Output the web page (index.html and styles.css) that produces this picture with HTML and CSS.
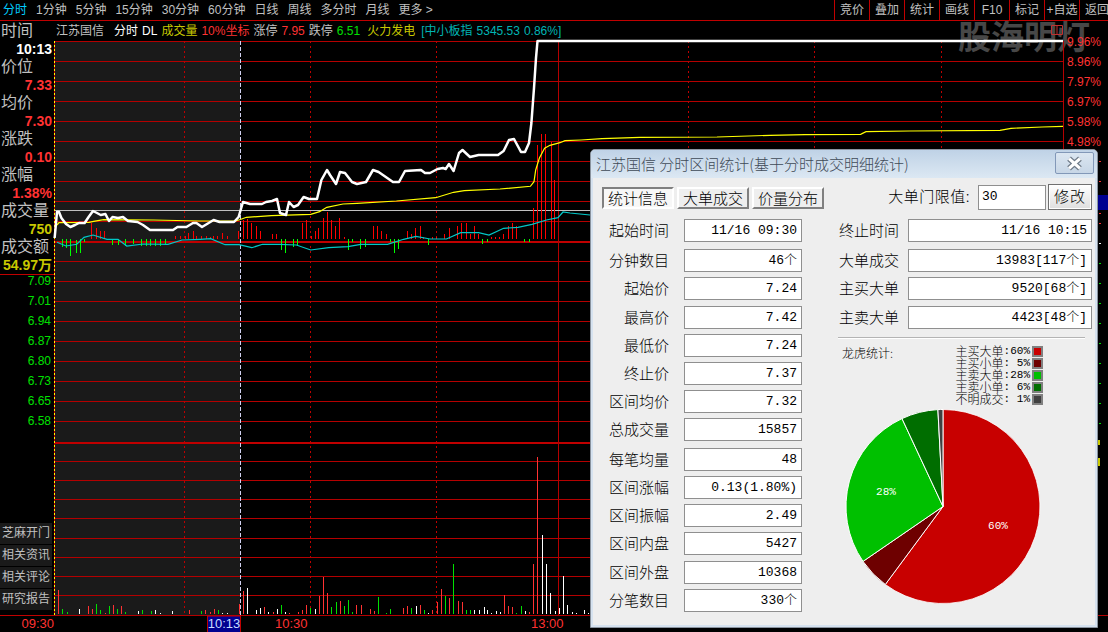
FILE: index.html
```html
<!DOCTYPE html>
<html lang="zh-CN">
<head>
    <meta charset="UTF-8">
    <title>江苏国信 分时区间统计</title>
    <link rel="stylesheet" href="styles.css">
</head>
<body>

    <div class="screen">

        <div class="watermark">股海明灯</div>

        <!-- period bar -->
        <nav class="topbar">
            <div class="periods">
                <span class="active">分时</span>
                <span>1分钟</span>
                <span>5分钟</span>
                <span>15分钟</span>
                <span>30分钟</span>
                <span>60分钟</span>
                <span>日线</span>
                <span>周线</span>
                <span>多分时</span>
                <span>月线</span>
                <span>更多 &gt;</span>
            </div>
            <div class="tools">
                <span>竞价</span>
                <span>叠加</span>
                <span>统计</span>
                <span>画线</span>
                <span>F10</span>
                <span>标记</span>
                <span>+自选</span>
                <span>返回</span>
            </div>
        </nav>

        <div class="main">

            <!-- left rail -->
            <aside class="rail">
                <div class="quote">
                    <div class="q-label">时间</div>
                    <div class="q-value white">10:13</div>
                    <div class="q-label">价位</div>
                    <div class="q-value red">7.33</div>
                    <div class="q-label">均价</div>
                    <div class="q-value red">7.30</div>
                    <div class="q-label">涨跌</div>
                    <div class="q-value red">0.10</div>
                    <div class="q-label">涨幅</div>
                    <div class="q-value red">1.38%</div>
                    <div class="q-label">成交量</div>
                    <div class="q-value yellow">750</div>
                    <div class="q-label">成交额</div>
                    <div class="q-value yellow">54.97万</div>
                </div>
                <div class="price-axis">
                    <span>7.09</span>
                    <span>7.01</span>
                    <span>6.94</span>
                    <span>6.87</span>
                    <span>6.80</span>
                    <span>6.73</span>
                    <span>6.65</span>
                    <span>6.58</span>
                </div>
                <div class="links">
                    <span>芝麻开门</span>
                    <span>相关资讯</span>
                    <span>相关评论</span>
                    <span>研究报告</span>
                </div>
                <div class="rail-foot">09:30</div>
            </aside>

            <section class="chart">
                <div class="chart-head">
                    <span class="grey name">江苏国信</span>
                    <span class="white">分时</span>
                    <span class="white">DL</span>
                    <span class="yellow">成交量</span>
                    <span class="red">10%坐标</span>
                    <span class="grey">涨停</span>
                    <span class="red">7.95</span>
                    <span class="grey">跌停</span>
                    <span class="green">6.51</span>
                    <span class="yellow fire">火力发电</span>
                    <span class="cyan index">[中小板指</span>
                    <span class="cyan">5345.53</span>
                    <span class="cyan">0.86%]</span>
                </div>

                <!-- viewBox keeps page coordinates, so the series read as screen positions -->
                <svg class="plot" viewBox="54 41 1054 591">
                    <rect class="shade" x="55" y="41" width="185" height="574"/>

                    <path class="grid" d="M54 41.5H1063M54 61.5H1063M54 81.5H1063M54 101.5H1063M54 121.5H1063M54 141.5H1063M54 161.5H1063M54 181.5H1063M54 201.5H1063M54 221.5H1063M54 261.5H1063M54 281.5H1063M54 301.5H1063M54 321.5H1063M54 341.5H1063M54 361.5H1063M54 381.5H1063M54 401.5H1063M54 421.5H1063M54 461.5H1063M54 480.5H1063M54 499.5H1063M54 518.5H1063M54 538.5H1063M54 557.5H1063M54 576.5H1063M54 595.5H1063"/>
                    <path class="grid-thick" d="M54 241.5H1063M54 443H1063"/>
                    <path class="grid-dots" d="M184.5 41V615M310.5 41V615M436.5 41V615M688.5 41V615M814.5 41V615M941.5 41V615"/>
                    <path class="grid" d="M558.5 41V615M1063.5 41V616"/>
                    <path class="edge" d="M54.5 41V615"/>
                    <path class="edge-dots" d="M54.5 41V615"/>
                    <path class="now" d="M240.5 41V615"/>
                    <path class="level" d="M55 210.5H1063"/>

                    <!-- minute volume, upper band -->
                    <path class="bar-up" d="M91.5 239V223M96.5 239V228M100.5 239V231M104.5 239V231M175.5 239V236M180.5 239V236M185.5 239V236M188.5 239V233M193.5 239V231M196.5 239V236M201.5 239V236M206.5 239V236M210.5 239V237M213.5 239V236M217.5 239V236M222.5 239V233M227.5 239V236M238.5 239V231M243.5 239V220M247.5 239V219M251.5 239V223M256.5 239V226M260.5 239V231M272.5 239V234M276.5 239V234M302.5 239V223M306.5 239V220M311.5 239V236M315.5 239V231M318.5 239V228M323.5 239V218M327.5 239V212M331.5 239V220M335.5 239V226M339.5 239V218M344.5 239V237M373.5 239V226M377.5 239V226M381.5 239V231M386.5 239V234M407.5 239V231M411.5 239V234M415.5 239V228M420.5 239V226M423.5 239V237M432.5 239V237M436.5 239V237M444.5 239V234M449.5 239V228M457.5 239V226M461.5 239V223M466.5 239V223M470.5 239V234M474.5 239V226M478.5 239V234M491.5 239V237M495.5 239V237M499.5 239V237M503.5 239V234M508.5 239V226M512.5 239V223M516.5 239V226M533.5 239V208M537.5 239V145M541.5 239V134M545.5 239V134M551.5 239V142M554.5 239V180"/>
                    <path class="bar-down" d="M62.5 239V247M66.5 239V248M70.5 239V256M76.5 240V253M80.5 239V253M84.5 239V242M112.5 239V245M118.5 239V245M125.5 239V246M133.5 239V244M141.5 239V246M146.5 239V246M150.5 239V246M155.5 239V246M160.5 239V246M165.5 239V245M281.5 239V250M285.5 239V253M293.5 239V247M297.5 239V245M348.5 239V250M352.5 239V242M360.5 239V249M365.5 239V247M390.5 239V242M394.5 239V253M398.5 239V249M428.5 239V245M482.5 239V244M487.5 239V242M524.5 239V242M529.5 239V242"/>

                    <path class="line-cyan" d="M57 242.3L66 246L76.8 244.3L84 237.3L93 235L107 239.3L118 239.3L126.8 246L143 244L168 244.3L182 240L200 239.3L210.7 238.7L225 244.7L239 244.7L251.8 247.7L262.5 244.3L280 244.3L296.4 245L310.7 250L328.6 247.7L348 246.7L360.7 244.3L387.5 244.3L403.6 239.3L416 236.3L430 239L446.4 239L460.7 232.7L478.6 232.7L489 235L503.6 228.3L518 227.3L532 224.3L546.4 220L558 217.7L563 212L570 213L590 215"/>
                    <path class="line-yellow" d="M57 225L59 222.7L89 222.3L93.6 221.3L103.6 219.7L153.6 220L200 221L235.7 221L241 219.3L246.4 217.3L271.4 215.7L310.7 214.3L319.6 211.7L326.8 207.3L343 204L357 203.3L396.4 201L435.7 197.7L453.6 192.3L464.3 190.7L500 189L530.4 186.3L534 181.7L535.7 170L539.3 158.3L544.6 148.3L550 145.3L560 142.7L565 140.7L581 140L602 138.7L640 137.3L717 137L770 135.3L805 134.7L860.6 134.3L866 131.7L909.5 131L1000 130.3L1011 128.3L1042 127L1063 126.3"/>
                    <path class="line-white" d="M54.6 238L55.4 230L57 212L59 212L61.4 218L66 224L70.4 227L75 225L79 223L84.6 223L88.6 217L93 211L97 213L100.7 215L105.4 214L109 221L112.5 217L118 218L123 217L128 221L137.5 222L143 225L150 230L173 230L177.5 227L186.4 227L193 223L196.4 223L202 227L207 224L213.6 220L219.6 222L234 222L238.6 217L243 202L250 204L262 204L266 202L272 201L277 199L280 213L286 215L289 202L293.6 207L298 205L303.6 197L309 199L317 199L321.4 180L327 170L330 175L336 184L340 172L345 173L352 182L357 184L366 182L373 170L378.6 172L393 182L399 182L405 171L421 170L425 173L430 173L437.5 169L443 168L445.7 169L449 164L453.6 171L459 153L462.5 150L470 157L478.6 155L498 155L503.6 151L509 140L514 139L521 152L525 152L529 143L531.4 123L534 88L536 58L537.5 41L1063 41"/>

                    <!-- minute volume, lower band -->
                    <path class="vol-red" d="M58.5 614V590M88.5 614V606M92.5 614V609M105.5 614V613M113.5 614V605M121.5 614V606M189.5 614V610M205.5 614V610M210.5 614V612M214.5 614V609M239.5 614V604M243.5 614V591M264.5 614V607M273.5 614V612M289.5 614V613M298.5 614V612M302.5 614V610M306.5 614V605M319.5 614V596M323.5 614V577M327.5 614V593M340.5 614V601M356.5 614V605M361.5 614V605M370.5 614V609M374.5 614V611M403.5 614V608M407.5 614V606M420.5 614V605M432.5 614V610M437.5 614V602M441.5 614V589M449.5 614V598M458.5 614V601M462.5 614V602M504.5 614V595M508.5 614V606M512.5 614V607M529.5 614V612M533.5 614V564M537.5 614V457"/>
                    <path class="vol-green" d="M62.5 614V609M67.5 614V612M96.5 614V604M100.5 614V610M109.5 614V606M117.5 614V609M125.5 614V612M142.5 614V610M151.5 614V611M201.5 614V611M218.5 614V610M281.5 614V605M310.5 614V608M331.5 614V607M336.5 614V602M344.5 614V606M348.5 614V600M352.5 614V612M378.5 614V597M386.5 614V613M390.5 614V609M411.5 614V608M424.5 614V610M445.5 614V596M453.5 614V564M466.5 614V610M470.5 614V610M516.5 614V613M521.5 614V606"/>
                    <path class="vol-white" d="M79.5 614V609M138.5 614V611M155.5 614V610M160.5 614V613M172.5 614V611M222.5 614V613M227.5 614V613M247.5 614V588M256.5 614V610M260.5 614V608M268.5 614V612M277.5 614V609M285.5 614V612M315.5 614V609M416.5 614V606M428.5 614V613M474.5 614V610M479.5 614V610M484.5 614V607M487.5 614V610M491.5 614V613M496.5 614V611M500.5 614V612M525.5 614V611M542.5 614V535M546.5 614V564M550.5 614V593M555.5 614V611M559.5 614V608M563.5 614V576M567.5 614V605M572.5 614V612M576.5 614V613M584.5 614V610M588.5 614V613"/>

                    <!-- time axis -->
                    <path class="grid" d="M54 615.5H1108"/>
                    <rect class="now-box" x="207.5" y="616" width="33" height="17"/>
                    <text class="now-text" x="224" y="628" text-anchor="middle">10:13</text>
                    <text class="time" x="275" y="628">10:30</text>
                    <text class="time" x="531" y="628">13:00</text>

                    <!-- percent axis -->
                    <text class="pct" x="1067" y="46">9.96%</text>
                    <text class="pct" x="1067" y="66">8.96%</text>
                    <text class="pct" x="1067" y="86">7.97%</text>
                    <text class="pct" x="1067" y="106">6.97%</text>
                    <text class="pct" x="1067" y="126">5.98%</text>
                    <text class="pct" x="1067" y="146">4.98%</text>
                    <rect class="flag" x="1090" y="195" width="18" height="15"/>
                    <path class="tick-red" d="M1099 161.5h2M1099 181.5h2M1099 213.5h2M1099 223.5h2"/>
                    <path class="tick-white" d="M1099 243.5h2"/>
                    <path class="tick-green" d="M1099 263.5h2M1099 283.5h2M1099 303.5h2M1099 323.5h2M1099 343.5h2M1099 363.5h2M1099 383.5h2M1099 403.5h2M1099 423.5h2"/>
                    <path class="tick-yellow" d="M1099 440v5M1099 458v8"/>
                </svg>
            </section>
        </div>

        <svg class="mark-box" viewBox="0 0 12 10"><path d="M.5 .5h11v9H.5zM6 .5v9"/></svg>

        <!-- interval statistics window -->
        <div class="dialog">
            <div class="dialog-title">
                <span>江苏国信 分时区间统计(基于分时成交明细统计)</span>
                <button class="close-btn">
                    <svg viewBox="0 0 14 12" width="17" height="15">
                        <path class="x-back" d="M2.5 2L11.5 10M11.5 2L2.5 10"/>
                        <path class="x-front" d="M2.5 2L11.5 10M11.5 2L2.5 10"/>
                    </svg>
                </button>
            </div>

            <div class="dialog-bar">
                <div class="tabs">
                    <span class="tab pressed">统计信息</span>
                    <span class="tab">大单成交</span>
                    <span class="tab">价量分布</span>
                </div>
                <div class="threshold">
                    <span class="threshold-label">大单门限值:</span>
                    <span class="threshold-input">30</span>
                    <span class="edit-btn">修改</span>
                </div>
            </div>

            <div class="dialog-body">
                <div class="col-left">
                    <div class="row"><label>起始时间</label><span class="val">11/16 09:30</span></div>
                    <div class="row gap-2"><label>分钟数目</label><span class="val">46个</span></div>
                    <div class="row"><label>起始价</label><span class="val">7.24</span></div>
                    <div class="row gap-1"><label>最高价</label><span class="val">7.42</span></div>
                    <div class="row"><label>最低价</label><span class="val">7.24</span></div>
                    <div class="row"><label>终止价</label><span class="val">7.37</span></div>
                    <div class="row"><label>区间均价</label><span class="val">7.32</span></div>
                    <div class="row"><label>总成交量</label><span class="val">15857</span></div>
                    <div class="row gap-2"><label>每笔均量</label><span class="val">48</span></div>
                    <div class="row"><label>区间涨幅</label><span class="val">0.13(1.80%)</span></div>
                    <div class="row"><label>区间振幅</label><span class="val">2.49</span></div>
                    <div class="row"><label>区间内盘</label><span class="val">5427</span></div>
                    <div class="row gap-1"><label>区间外盘</label><span class="val">10368</span></div>
                    <div class="row"><label>分笔数目</label><span class="val">330个</span></div>
                </div>

                <div class="col-right">
                    <div class="row"><label>终止时间</label><span class="val">11/16 10:15</span></div>
                    <div class="row gap-2"><label>大单成交</label><span class="val">13983[117个]</span></div>
                    <div class="row"><label>主买大单</label><span class="val">9520[68个]</span></div>
                    <div class="row gap-1"><label>主卖大单</label><span class="val">4423[48个]</span></div>

                    <div class="separator"></div>

                    <div class="stats-block">
                        <div class="stats">
                            <div class="stats-title">龙虎统计:</div>
                            <div class="legend">
                                <div class="legend-row">主买大单<b>:60%</b><i class="sw s-buy-big"></i></div>
                                <div class="legend-row">主买小单<b>: 5%</b><i class="sw s-buy-small"></i></div>
                                <div class="legend-row">主卖大单<b>:28%</b><i class="sw s-sell-big"></i></div>
                                <div class="legend-row">主卖小单<b>: 6%</b><i class="sw s-sell-small"></i></div>
                                <div class="legend-row">不明成交<b>: 1%</b><i class="sw s-other"></i></div>
                            </div>
                        </div>

                        <svg class="pie" viewBox="838 405 210 204">
                            <path class="p-buy-big" d="M943 506.5V409.5A97 97 0 1 1 885.3 584.5Z"/>
                            <path class="p-buy-small" d="M943 506.5L885.3 584.5A97 97 0 0 1 863 561.4Z"/>
                            <path class="p-sell-big" d="M943 506.5L863 561.4A97 97 0 0 1 902 418.6Z"/>
                            <path class="p-sell-small" d="M943 506.5L902 418.6A97 97 0 0 1 937.9 409.6Z"/>
                            <path class="p-other" d="M943 506.5L937.9 409.6A97 97 0 0 1 943 409.5Z"/>
                            <text class="pie-text" x="998" y="529" text-anchor="middle">60%</text>
                            <text class="pie-text" x="886" y="495" text-anchor="middle">28%</text>
                        </svg>
                    </div>
                </div>
            </div>
        </div>

    </div>

</body>
</html>
```

FILE: styles.css
```css
/* --- General --- */
:root {
    --grid: #b40000;
    --grid-strong: #c00000;
    --red: #ff3232;
    --green: #00e000;
    --yellow: #c8c800;
    --cyan: #00b4b4;
    --grey: #c0c0c0;
    --panel: #eeeeee;
    --box-border: #8f8f8f;
    --sans: "Liberation Sans", "Noto Sans CJK SC", sans-serif;
    --mono: "Liberation Mono", "Noto Sans CJK SC", monospace;
}

html, body { margin: 0; padding: 0; }

body {
    background-color: #000000;
    color: var(--grey);
    font-family: var(--sans);
    font-size: 12px;
    overflow: hidden;
}

.screen {
    position: relative;
    width: 1108px;
    height: 632px;
    overflow: hidden;
}

.white { color: #ffffff; }
.red { color: var(--red); }
.green { color: var(--green); }
.yellow { color: var(--yellow); }
.cyan { color: var(--cyan); }
.grey { color: var(--grey); }

/* --- Top bar --- */
.topbar {
    position: relative;
    z-index: 1;
    display: flex;
    justify-content: space-between;
    height: 20px;
    border-bottom: 1px solid var(--grid-strong);
    line-height: 20px;
}
.periods { display: flex; gap: 9px; padding-left: 3px; }
.periods .active { color: #00ccff; }
.tools { display: flex; width: 274px; }
.tools span {
    flex: 0 0 35px;
    box-sizing: border-box;
    border-left: 1px solid var(--grid-strong);
    text-align: center;
    white-space: nowrap;
}

/* --- Left rail --- */
.main { position: relative; z-index: 1; display: flex; height: 611px; }
.rail {
    display: flex;
    flex-direction: column;
    flex: 0 0 54px;
    width: 54px;
}
.quote {
    padding-top: 1px;
    border-bottom: 1px solid var(--grid-strong);
}
.q-label, .q-value { height: 18px; line-height: 18px; white-space: nowrap; }
.q-label { font-size: 16px; padding-left: 1px; }
.q-value { font-size: 14px; font-weight: 700; text-align: right; padding-right: 2px; }

.price-axis {
    display: flex;
    flex-direction: column;
    gap: 8px;
    color: var(--green);
    text-align: right;
    padding-right: 3px;
}
.price-axis span { height: 12px; line-height: 12px; }

.links {
    display: flex;
    flex-direction: column;
    gap: 1px;
    margin-top: auto;
    margin-bottom: 5px;
}
.links span {
    height: 21px;
    line-height: 21px;
    width: 52px;
    background-color: #1a1a1a;
    text-align: center;
    white-space: nowrap;
}
.rail-foot {
    height: 16px;
    border-top: 1px solid var(--grid-strong);
    color: var(--red);
    font-size: 13px;
    line-height: 15px;
    text-align: right;
}

/* --- Chart --- */
.chart { display: flex; flex-direction: column; flex: 1; }
.chart-head {
    display: flex;
    gap: 4px;
    height: 20px;
    line-height: 20px;
    padding-left: 2px;
    white-space: nowrap;
}
.chart-head .name { margin-right: 6px; }
.chart-head .fire { margin-left: 3px; }
.chart-head .index { margin-left: 2px; }

.plot { display: block; width: 1054px; height: 591px; overflow: visible; }
.plot path { fill: none; }

.shade { fill: #1a1a1a; }
.grid { stroke: var(--grid); stroke-width: 1; shape-rendering: crispEdges; }
.grid-thick { stroke: var(--grid-strong); stroke-width: 2; shape-rendering: crispEdges; }
.grid-dots { stroke: #c00000; stroke-width: 1; stroke-dasharray: 2 3; shape-rendering: crispEdges; }
.edge { stroke: #c00000; stroke-width: 1; shape-rendering: crispEdges; }
.edge-dots { stroke: #ffff00; stroke-width: 1; stroke-dasharray: 2 2; shape-rendering: crispEdges; }
.now { stroke: #d0d0f0; stroke-width: 1; stroke-dasharray: 4 2; shape-rendering: crispEdges; }
.level { stroke: #c0c0c0; stroke-width: 1; shape-rendering: crispEdges; }

.bar-up { stroke: #ff0000; stroke-width: 1; shape-rendering: crispEdges; }
.bar-down { stroke: #00ff00; stroke-width: 1; shape-rendering: crispEdges; }
.vol-red { stroke: #ff3232; stroke-width: 1; shape-rendering: crispEdges; }
.vol-green { stroke: #00e000; stroke-width: 1; shape-rendering: crispEdges; }
.vol-white { stroke: #ffffff; stroke-width: 1; shape-rendering: crispEdges; }

.line-white { stroke: #ffffff; stroke-width: 2.5; stroke-linejoin: round; }
.line-yellow { stroke: #ffff00; stroke-width: 1.2; }
.line-cyan { stroke: #00c8c8; stroke-width: 1.2; }

.now-box { fill: #000090; stroke: var(--grid-strong); }
.now-text { fill: #c8dcff; font-size: 13px; }
.time { fill: var(--red); font-size: 13px; }
.pct { fill: var(--red); font-size: 12px; }
.flag { fill: #000090; }
.tick-red { stroke: var(--red); shape-rendering: crispEdges; }
.tick-white { stroke: #ffffff; shape-rendering: crispEdges; }
.tick-green { stroke: var(--green); shape-rendering: crispEdges; }
.tick-yellow { stroke: var(--yellow); stroke-width: 2; shape-rendering: crispEdges; }

/* --- Watermark --- */
.watermark {
    position: absolute;
    left: 958px;
    top: 13px;
    color: #474747;
    font-family: "Noto Sans CJK SC", sans-serif;
    font-size: 33px;
    font-weight: 700;
    line-height: 44px;
    white-space: nowrap;
}
.mark-box {
    position: absolute;
    z-index: 1;
    left: 1051px;
    top: 25px;
    width: 12px;
    height: 10px;
    fill: none;
    stroke: #c03030;
    stroke-width: 1;
}

/* --- Dialog --- */
.dialog {
    position: absolute;
    z-index: 2;
    left: 590px;
    top: 149px;
    width: 508px;
    height: 479px;
    box-sizing: border-box;
    display: flex;
    flex-direction: column;
    border: 1px solid #8a939e;
    border-radius: 5px 5px 0 0;
    background-color: var(--panel);
    box-shadow: inset 0 0 0 2px #d6e2ef;
    color: #000000;
    font-family: "Noto Sans CJK SC", sans-serif;
    font-size: 15px;
    font-weight: 300;
}
.dialog-title {
    display: flex;
    align-items: center;
    justify-content: space-between;
    height: 28px;
    padding: 0 3px 2px 5px;
    box-sizing: border-box;
    border-radius: 4px 4px 0 0;
    background: linear-gradient(#bfd2e6, #dce8f3);
    color: #3f4a57;
    white-space: nowrap;
}
.close-btn {
    display: flex;
    align-items: center;
    justify-content: center;
    width: 39px;
    height: 22px;
    padding: 0;
    border: 1px solid #8298b8;
    border-radius: 2px;
    background: linear-gradient(#dbe6f1, #c7d6e6);
}
.x-back { fill: none; stroke: #6f7b88; stroke-width: 4.5; }
.x-front { fill: none; stroke: #ffffff; stroke-width: 2.6; }

.dialog-bar {
    display: flex;
    align-items: center;
    justify-content: space-between;
    height: 27px;
    margin-top: 6px;
    padding: 0 5px 0 11px;
}
.tabs { display: flex; gap: 3px; }
.tab {
    box-sizing: border-box;
    width: 72px;
    height: 22px;
    line-height: 17px;
    text-align: center;
    border: 2px solid;
    border-color: #ffffff #808080 #808080 #ffffff;
    background-color: var(--panel);
    white-space: nowrap;
}
.tab.pressed {
    border-color: #808080 #ffffff #ffffff #808080;
    background-color: #f7f7f7;
}

.threshold { display: flex; align-items: center; }
.threshold-label { margin-right: 8px; letter-spacing: .5px; line-height: 22px; padding-bottom: 3px; white-space: nowrap; }
.threshold-input {
    box-sizing: border-box;
    width: 68px;
    height: 25px;
    padding-left: 3px;
    border: 1px solid var(--box-border);
    background-color: #ffffff;
    font-family: var(--mono);
    font-size: 13px;
    line-height: 22px;
}
.edit-btn {
    box-sizing: border-box;
    width: 44px;
    height: 26px;
    margin: -2px 0 0 2px;
    border: 1px solid #707070;
    background: linear-gradient(#ffffff, #dedede);
    line-height: 21px;
    text-align: center;
    letter-spacing: 1px;
    box-shadow: inset 0 0 0 1px #ffffff;
}

.dialog-body {
    display: flex;
    justify-content: space-between;
    margin-top: 8px;
    padding: 0 5px 0 11px;
}
.col-left, .col-right { display: flex; flex-direction: column; gap: 5px; }
.col-left { width: 200px; }
.col-right { width: 254px; }

.row { display: flex; justify-content: space-between; align-items: flex-start; height: 23px; }
.row.gap-1 { margin-top: 1px; }
.row.gap-2 { margin-top: 2px; }
.row label { white-space: nowrap; line-height: 21px; }
.col-left label { width: 67px; text-align: right; }
.col-right label { padding-left: 1px; }

.val {
    box-sizing: border-box;
    height: 23px;
    padding-right: 4px;
    border: 1px solid var(--box-border);
    background-color: #ffffff;
    font-family: var(--mono);
    font-size: 13px;
    line-height: 21px;
    text-align: right;
    white-space: nowrap;
}
.col-left .val { width: 118px; }
.col-right .val { width: 184px; }

.separator {
    width: 247px;
    height: 1px;
    margin-top: 3px;
    background-color: #b4b4b4;
    border-bottom: 1px solid #ffffff;
}

.stats-block { margin-top: 1px; }
.stats { display: flex; justify-content: space-between; padding: 0 49px 0 4px; }
.stats-title { margin-top: 2px; font-size: 12px; line-height: 12px; }
.legend { display: flex; flex-direction: column; }
.legend-row {
    display: flex;
    align-items: center;
    height: 12px;
    font-size: 12px;
    line-height: 12px;
    white-space: nowrap;
}
.legend-row b {
    font-family: var(--mono);
    font-size: 11px;
    font-weight: 400;
    white-space: pre;
}
.sw {
    box-sizing: border-box;
    width: 11px;
    height: 11px;
    margin-left: 2px;
    border: 2px solid #808080;
}
.s-buy-big, .p-buy-big { background-color: #c80000; fill: #c80000; }
.s-buy-small, .p-buy-small { background-color: #6e0000; fill: #6e0000; }
.s-sell-big, .p-sell-big { background-color: #00c000; fill: #00c000; }
.s-sell-small, .p-sell-small { background-color: #006e00; fill: #006e00; }
.s-other, .p-other { background-color: #404040; fill: #404040; }

.pie { display: block; width: 210px; height: 204px; }
.pie path { stroke: #ffffff; stroke-width: 1; }
.pie path.p-buy-big { stroke-width: .8; }
.pie-text { fill: #ffffff; font-family: var(--mono); font-size: 11px; }
```
